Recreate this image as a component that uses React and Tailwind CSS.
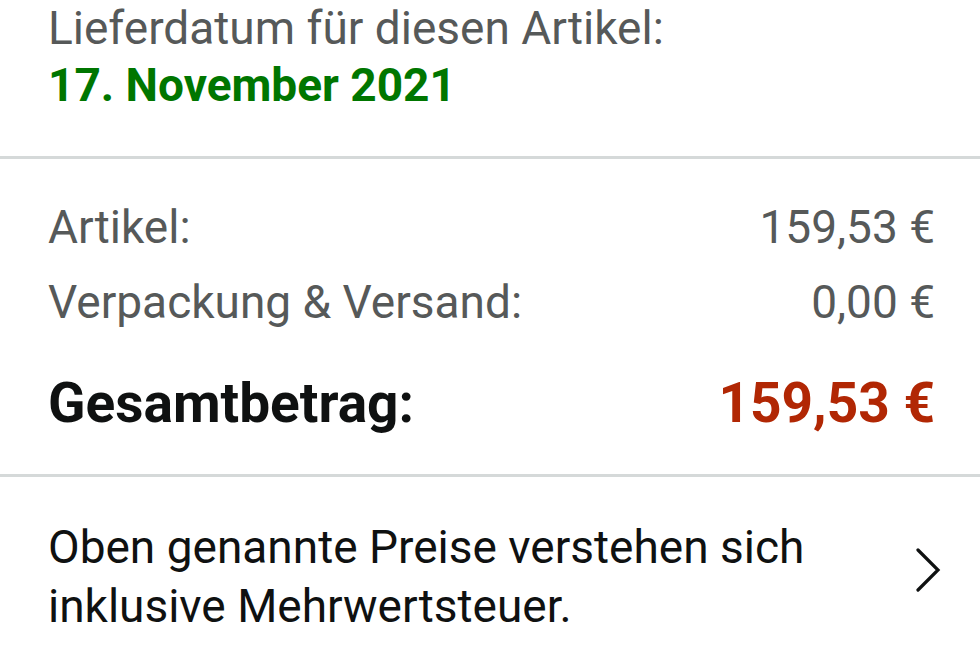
import React from "react";

export default function App() {
  return (
    <div className="w-[980px] h-[669px] bg-white overflow-hidden font-['Roboto',sans-serif]">
      <div className="pl-[48px] pr-[45px]">
        <div className="text-[46px] leading-[57px] text-[#565959]">Lieferdatum für diesen Artikel:</div>
        <div className="text-[46px] leading-[57px] font-bold text-[#007600]">17. November 2021</div>
      </div>
      <div className="mt-[42px] h-[3px] bg-[#d5d9d9]" />
      <div className="pl-[48px] pr-[45px] pt-[39px] pb-[39px]">
        <div className="flex justify-between text-[46px] leading-[58px] text-[#565959]">
          <span>Artikel:</span>
          <span>159,53 €</span>
        </div>
        <div className="mt-[17px] flex justify-between text-[46px] leading-[58px] text-[#565959]">
          <span>Verpackung &amp; Versand:</span>
          <span>0,00 €</span>
        </div>
        <div className="mt-[40px] flex justify-between text-[55px] leading-[64px] font-bold">
          <span className="text-[#0F1111]">Gesamtbetrag:</span>
          <span className="text-[#B12704]">159,53 €</span>
        </div>
      </div>
      <div className="h-[3px] bg-[#d5d9d9]" />
      <div className="pl-[48px] pr-[38px] pt-[41px] flex justify-between items-start">
        <div className="text-[46px] leading-[59px] text-[#0F1111]">
          Oben genannte Preise verstehen sich
          <br />
          inklusive Mehrwertsteuer.
        </div>
        <svg width="26" height="44" viewBox="0 0 26 44" className="mt-[30px] shrink-0">
          <path d="M2 2 L22 22 L2 42" fill="none" stroke="#0F1111" strokeWidth="3.2" strokeLinecap="round" strokeLinejoin="miter" />
        </svg>
      </div>
    </div>
  );
}
